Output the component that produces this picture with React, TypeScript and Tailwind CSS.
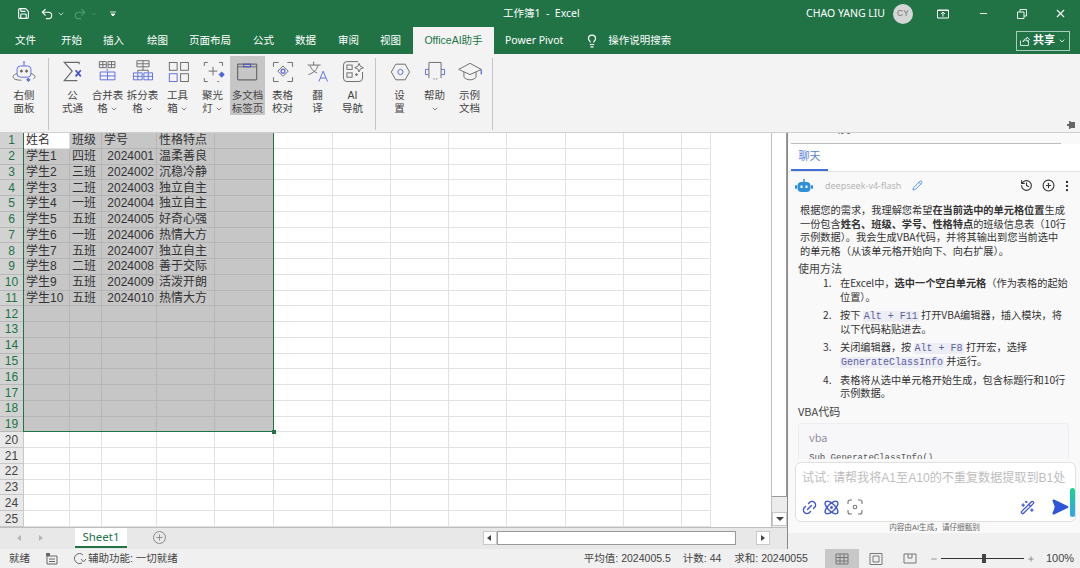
import React from 'react';
import {
  Save, Undo2, Redo2, ChevronDown, Lightbulb, Minus, X, Pencil, History, CirclePlus,
  EllipsisVertical, Link2, Atom, WandSparkles, SendHorizontal, Plus,
} from 'lucide-react';

const BLUE = '#5b6ee1';
const GRAY = '#6b6b6b';

const tabs: [string, string][] = [
  ['文件', 'ml-[15px]'], ['开始', 'ml-[25px]'], ['插入', 'ml-[21px]'], ['绘图', 'ml-[23px]'], ['页面布局', 'ml-[21px]'],
  ['公式', 'ml-[22px]'], ['数据', 'ml-[21px]'], ['审阅', 'ml-[22px]'], ['视图', 'ml-[21px]'],
];

const Svg = ({ children }: { children: React.ReactNode }) => (
  <svg width="26" height="26" viewBox="0 0 30 30" fill="none" stroke={GRAY} strokeWidth="1.1">{children}</svg>
);

const icons: Record<string, React.ReactNode> = {
  robot: (
    <Svg>
      <rect x="7" y="8" width="16" height="13" rx="4" stroke={BLUE} />
      <circle cx="12" cy="14" r="1.2" fill={GRAY} /><circle cx="18" cy="14" r="1.2" fill={GRAY} />
      <path d="M15 8V4" stroke={BLUE} /><circle cx="15" cy="3.5" r="1" fill={BLUE} stroke="none" />
      <path d="M7 17c-5 1-6 4-3 6 2 1 5 1.500 8 1.500M23 17c5 1 6 4 3 6" />
      <path d="M18 24l2-2 2 2-2 2z" fill={BLUE} stroke={BLUE} />
    </Svg>
  ),
  sum: (
    <Svg>
      <path d="M22 6V4H5l9 10-9 11h15" strokeWidth="1.4" />
      <path d="M18 13l6 7M24 13l-6 7" stroke="#4050d0" strokeWidth="2" />
    </Svg>
  ),
  merge: (
    <Svg>
      <path d="M5 3h8v7H5zM15 3h8v7h-8zM9 3v7M5 6.500h8M19 3v7M15 6.500h8" />
      <path d="M14 11v3" stroke={BLUE} />
      <path d="M6 15h17v9H6zM6 19.500h17M14.500 15v9" stroke={BLUE} />
    </Svg>
  ),
  split: (
    <Svg>
      <path d="M8 2h14v7H8zM8 5.500h14M15 2v7" />
      <path d="M15 9v4M9 15v-2h12v2" stroke={GRAY} />
      <path d="M4 16h10v8H4zM9 16v8M4 20h10M16 16h10v8H16zM21 16v8M16 20h10" stroke={BLUE} />
    </Svg>
  ),
  tool: (
    <Svg>
      <rect x="5" y="4" width="9" height="9" /><rect x="18" y="4" width="9" height="9" />
      <rect x="5" y="17" width="9" height="9" stroke={BLUE} /><rect x="18" y="17" width="9" height="9" />
    </Svg>
  ),
  spot: (
    <Svg>
      <path d="M5 8V4h4M22 4h4v4M5 22v4h4M22 26h-2" />
      <path d="M15 9v10M10 14h10" stroke={GRAY} />
      <path d="M25 15l3 3-3 3-3-3z" fill="#4a66e0" stroke="#4a66e0" />
    </Svg>
  ),
  multi: (
    <Svg>
      <rect x="3" y="6" width="22" height="18" rx="1" strokeWidth="1.4" />
      <path d="M3 9h22" strokeWidth="1.2" />
      <rect x="10" y="6" width="8" height="3" stroke="#4a55c8" strokeWidth="1.2" />
    </Svg>
  ),
  check: (
    <Svg>
      <path d="M4 9V4h6M20 4h6v5M4 21v5h6M20 26h6v-5" />
      <path d="M15 8l6 6-6 6-6-6z" />
      <circle cx="15" cy="14" r="2.200" stroke={BLUE} strokeWidth="1.500" />
    </Svg>
  ),
  trans: (
    <Svg>
      <path d="M3 7h15M10 3v4M15 7c-1 5-5 9-11 11M6 8c2 5 5 7 8 8" />
      <path d="M16 26l5-12 5 12M18 22h6" stroke={BLUE} />
    </Svg>
  ),
  nav: (
    <Svg>
      <path d="M21 3H8a4 4 0 0 0-4 4v15a4 4 0 0 0 4 4h14a4 4 0 0 0 4-4v-7" />
      <rect x="8" y="7" width="6" height="5" /><rect x="8" y="16" width="6" height="5" />
      <path d="M22 5l1.500 3.500L27 10l-3.500 1.500L22 15l-1.500-3.500L17 10l3.500-1.500z" />
      <circle cx="19" cy="18" r="1" fill={GRAY} />
    </Svg>
  ),
  gear: (
    <Svg>
      <path d="M10 6h11l5 9-5 9H10l-5-9z" />
      <circle cx="15.500" cy="15" r="3" stroke={BLUE} />
    </Svg>
  ),
  help: (
    <Svg>
      <path d="M8 22V4h14v18" />
      <path d="M8 12H4v6h4M22 12h4v6h-4" stroke={BLUE} />
      <path d="M13 23h6" strokeDasharray="1.500 1.500" />
    </Svg>
  ),
  edu: (
    <Svg>
      <path d="M15 5L2 12l13 6 13-6z" />
      <path d="M8 15v6c3 4 11 4 14 0v-6" />
      <path d="M28 12v6" stroke={BLUE} strokeWidth="1.500" />
    </Svg>
  ),
};

const Tool = ({ icon, l1, l2, chev, w = 'w-[35px]', active }: { icon: string; l1: string; l2?: string; chev?: boolean; w?: string; active?: boolean }) => (
  <div className={`${w} h-[59px] flex flex-col items-center ${active ? 'bg-[#c6c6c6]' : ''}`}>
    <div className="h-[31px] flex items-center justify-center">{icons[icon]}</div>
    <div className="text-[10.5px] leading-[13px] mt-[2px] text-[#444] text-center whitespace-nowrap">
      <div>{l1}</div>
      <div className="flex items-center justify-center gap-[2px] h-[13px]">
        {l2}
        {chev && <ChevronDown size={8} strokeWidth={2} />}
      </div>
    </div>
  </div>
);

const Sep = () => <div className="w-px h-[72px] bg-[#c4c4c4] mt-[2px]" />;

const rows: string[][] = [
  ['姓名', '班级', '学号', '性格特点'],
  ['学生1', '四班', '2024001', '温柔善良'],
  ['学生2', '三班', '2024002', '沉稳冷静'],
  ['学生3', '二班', '2024003', '独立自主'],
  ['学生4', '一班', '2024004', '独立自主'],
  ['学生5', '五班', '2024005', '好奇心强'],
  ['学生6', '一班', '2024006', '热情大方'],
  ['学生7', '五班', '2024007', '独立自主'],
  ['学生8', '二班', '2024008', '善于交际'],
  ['学生9', '五班', '2024009', '活泼开朗'],
  ['学生10', '五班', '2024010', '热情大方'],
];

const COLS = 13;

const Sheet = () => (
  <div className="relative h-[394px] grid grid-cols-[24px_46px_32px_55px_58px_59px_59px_58px_58px_58px_59px_58px_58px_29px] grid-rows-[repeat(25,minmax(0,1fr))] text-[12px] leading-[14px] text-[#333] overflow-hidden">
    {Array.from({ length: 25 }).map((_, r) => (
      <React.Fragment key={r}>
        <div className={`min-h-0 flex items-center justify-center border-b border-r text-[12px] ${r < 19 ? 'bg-[#d2d2d2] text-[#217346] border-[#b8b8b8]' : 'bg-[#e9e9e9] text-[#444] border-[#c8c8c8]'}`}>
          {r + 1}
        </div>
        {Array.from({ length: COLS }).map((_, c) => {
          const sel = r < 19 && c < 5;
          const text = rows[r]?.[c] ?? '';
          const first = r === 0 && c === 0;
          const isNum = c === 2 && r > 0;
          return (
            <div
              key={c}
              className={`min-h-0 flex items-center border-b border-r whitespace-nowrap px-[2px] ${isNum ? 'justify-end' : ''} ${first ? 'bg-white border-[#e0e0e0]' : sel ? 'bg-[#c6c6c6] border-[#b6b6b6]' : 'bg-white border-[#e2e2e2]'}`}
            >
              {text}
            </div>
          );
        })}
      </React.Fragment>
    ))}
    <div className="absolute left-[23px] top-0 w-[251px] h-[299px] border border-[#217346] border-t-0 pointer-events-none" />
    <div className="absolute left-[272px] top-[297px] w-[4px] h-[4px] bg-[#217346]" />
  </div>
);

const Code = ({ children }: { children: React.ReactNode }) => (
  <code className="font-['Liberation_Mono',monospace] text-[10px] leading-[1] bg-[#ecedf5] text-[#5c5f9e] px-[1px]">{children}</code>
);

const ListItem = ({ n, children }: { n: number; children: React.ReactNode }) => (
  <div className="flex mb-[4.5px]">
    <span className="w-[17px] shrink-0">{n}.</span>
    <div>{children}</div>
  </div>
);

const Panel = () => (
  <div className="w-[293px] shrink-0 flex flex-col bg-[#f9f9f9] border-l border-[#8a8a8a] overflow-hidden">
    <div className="h-[11px] mx-[3px] w-[270px] border-b border-[#bdbdbd] overflow-hidden">
      <div className="text-[10px] leading-none -mt-[8px] ml-[8px] text-[#555]">OfficeAI助手</div>
    </div>
    <div className="h-[28px] border-b border-[#e2e2e2] bg-white shrink-0">
      <div className="w-[37px] ml-[3px] h-full border-b-2 border-[#3f6fd8] flex items-center justify-center text-[11px] text-[#5b7fd6]">聊天</div>
    </div>
    <div className="flex-1 min-h-0 overflow-hidden">
      <div className="h-[27px] flex items-center">
        <svg width="18" height="14" viewBox="0 0 18 14" className="ml-[7px]">
          <path d="M9 0v3" stroke="#2f8fd8" strokeWidth="1.500" />
          <rect x="2.500" y="3" width="13" height="10" rx="4" fill="#2f8fd8" />
          <rect x="0" y="6" width="2" height="4" rx="1" fill="#2f8fd8" /><rect x="16" y="6" width="2" height="4" rx="1" fill="#2f8fd8" />
          <rect x="5.500" y="6.500" width="2" height="2.500" fill="#fff" /><rect x="10.500" y="6.500" width="2" height="2.500" fill="#fff" />
        </svg>
        <span className="ml-[12px] text-[9px] text-[#b5b5b5] font-['Noto_Sans',sans-serif]">deepseek-v4-flash</span>
        <Pencil size={11} className="ml-[11px] text-[#4a90e2]" />
        <History size={13} className="ml-[97px] text-[#333]" />
        <CirclePlus size={13} className="ml-[9px] text-[#333]" />
        <EllipsisVertical size={14} className="ml-[5px] text-[#333]" />
      </div>
      <div className="text-[10.2px] leading-[13.6px] text-[#333] font-['Noto_Sans_CJK_SC',sans-serif] whitespace-nowrap">
        <p className="ml-[12px] mt-[4px]">
          根据您的需求，我理解您希望<b>在当前选中的单元格位置</b>生成<br />
          一份包含<b>姓名、班级、学号、性格特点</b>的班级信息表（10行<br />
          示例数据）。我会生成VBA代码，并将其输出到您当前选中<br />
          的单元格（从该单元格开始向下、向右扩展）。
        </p>
        <p className="ml-[10px] mt-[4px] text-[11px] leading-[15px] text-[#444]">使用方法</p>
        <div className="ml-[35px]">
          <ListItem n={1}>在Excel中，<b>选中一个空白单元格</b>（作为表格的起始<br />位置）。</ListItem>
          <ListItem n={2}>按下 <Code>Alt + F11</Code> 打开VBA编辑器，插入模块，将<br />以下代码粘贴进去。</ListItem>
          <ListItem n={3}>关闭编辑器，按 <Code>Alt + F8</Code> 打开宏，选择<br /><Code>GenerateClassInfo</Code> 并运行。</ListItem>
          <ListItem n={4}>表格将从选中单元格开始生成，包含标题行和10行<br />示例数据。</ListItem>
        </div>
        <p className="ml-[10px] mt-[3px] text-[11px] leading-[15px] text-[#444]">VBA代码</p>
        <div className="ml-[10px] w-[271px] mt-[4px] h-[60px] border border-[#ececf2] rounded-t-[4px] bg-[#f7f7fa] px-[10px] pt-[7px] text-[#8f8fa8] text-[11px]">
          vba
          <div className="mt-[7px] font-['Liberation_Mono',monospace] text-[9px] text-[#555]">Sub GenerateClassInfo()</div>
        </div>
      </div>
    </div>
    <div className="shrink-0 ml-[7px] mr-[4px] h-[60px] mt-[3px] bg-white border border-[#e0e0e0] rounded-[6px] relative flex flex-col">
      <div className="text-[12.1px] text-[#bdbdbd] mt-[6px] ml-[6px] whitespace-nowrap">试试: 请帮我将A1至A10的不重复数据提取到B1处</div>
      <div className="flex items-center mt-auto mb-[5px] ml-[5px]">
        <Link2 size={17} className="text-[#3f55d8] -rotate-45" />
        <Atom size={17} className="ml-[5px] text-[#3f55d8]" />
        <svg width="16" height="16" viewBox="0 0 16 16" fill="none" stroke="#777" strokeWidth="1.100" className="ml-[7px]">
          <path d="M1 5V3a2 2 0 0 1 2-2h2M11 1h2a2 2 0 0 1 2 2v2M1 11v2a2 2 0 0 0 2 2h2M11 15h2a2 2 0 0 0 2-2v-2" />
          <circle cx="8" cy="8" r="1.800" />
        </svg>
        <WandSparkles size={15} className="ml-[157px] text-[#3f55d8]" />
        <SendHorizontal size={18} className="ml-[16px] text-[#2f55d8] fill-[#2f55d8]" />
      </div>
      <div className="absolute right-0 top-[25px] w-[5px] h-[29px] rounded-full bg-gradient-to-b from-[#1ed08a] to-[#3aa0ea]" />
    </div>
    <div className="h-[11px] shrink-0 text-center text-[7.6px] leading-[11px] text-[#666] pl-[1px]">内容由AI生成，请仔细甄别</div>
    <div className="h-[16px] shrink-0 bg-[#f0f0f0]" />
  </div>
);

const Arrow = ({ dir, className = '' }: { dir: 'l' | 'r' | 'd'; className?: string }) => {
  const d = dir === 'l' ? 'M6 2L2 5l4 3z' : dir === 'r' ? 'M3 2l4 3-4 3z' : 'M1 3h8L5 7z';
  return (
    <svg width="10" height="10" viewBox="0 0 10 10" className={className}><path d={d} fill="#444" /></svg>
  );
};

const ViewIcon = ({ kind }: { kind: number }) => (
  <svg width="14" height="12" viewBox="0 0 14 12" fill="none" stroke="#777" strokeWidth="1">
    {kind === 0 && <path d="M1 1h12v10H1zM5 1v10M9 1v10M1 4.500h12M1 8h12" />}
    {kind === 1 && <path d="M1 .5h12v11H1zM4 3h6v6H4z" />}
    {kind === 2 && <path d="M1 1h12v9H1zM5 1v4h4V1" />}
  </svg>
);

export default function App() {
  return (
    <div className="w-[1080px] h-[568px] overflow-hidden flex flex-col bg-white font-['Liberation_Sans','Noto_Sans_CJK_SC',sans-serif]">
      {/* title bar */}
      <div className="h-[27px] shrink-0 bg-[#217346] text-white flex items-center relative">
        <Save size={13} className="ml-[17px]" />
        <Undo2 size={14} className="ml-[10px]" />
        <ChevronDown size={8} className="ml-[3px]" />
        <Redo2 size={14} className="ml-[8px] text-[#4f9a70]" />
        <ChevronDown size={8} className="ml-[3px] text-[#4f9a70]" />
        <svg width="6" height="6" viewBox="0 0 6 6" className="ml-[12px]"><path d="M0 1h6M1 3h4l-2 2z" stroke="#fff" strokeWidth=".8" fill="#fff" /></svg>
        <span className="ml-[387px] text-[10.5px] font-['Noto_Sans','Noto_Sans_CJK_SC',sans-serif] whitespace-nowrap">工作簿1 &nbsp;-&nbsp; Excel</span>
        <span className="ml-auto text-[10.5px] font-['Noto_Sans',sans-serif] whitespace-nowrap">CHAO YANG LIU</span>
        <div className="ml-[8px] w-[20px] h-[20px] rounded-full bg-[#d6d6d6] text-[#777] text-[8.5px] flex items-center justify-center">CY</div>
        <svg width="12" height="10" viewBox="0 0 12 10" fill="none" stroke="#fff" className="ml-[24px]"><path d="M.5 1h11v8H.500zM1 1.500h10" /><path d="M6 7.500V3.500M4 5l2-2 2 2" /></svg>
        <Minus size={11} className="ml-[29px]" />
        <svg width="10" height="10" viewBox="0 0 10 10" fill="none" stroke="#fff" strokeWidth=".9" className="ml-[28px]"><path d="M.5 3h6.500v6.500H.500zM3 3V.5h6.500V7H7" /></svg>
        <X size={13} className="ml-[27px] mr-[13px]" />
      </div>
      {/* tab row */}
      <div className="h-[27px] shrink-0 bg-[#217346] text-white flex items-center text-[10.5px] whitespace-nowrap">
        {tabs.map(([t, m]) => (
          <span key={t} className={m}>{t}</span>
        ))}
        <div className="ml-[12px] w-[81px] h-full bg-[#f3f3f3] text-[#217346] flex items-center justify-center">OfficeAI助手</div>
        <span className="ml-[11px] font-['Noto_Sans',sans-serif]">Power Pivot</span>
        <Lightbulb size={14} className="ml-[22px]" />
        <span className="ml-[9px]">操作说明搜索</span>
        <div className="ml-auto mr-[10px] w-[54px] h-[20px] border border-[#a8cdb8] flex items-center justify-center gap-[3px] font-bold text-[11px]">
          <svg width="10" height="10" viewBox="0 0 10 10" fill="none" stroke="#fff" strokeWidth=".8"><path d="M.5 4.500v5h8V5M3 6c0-2 2-3.500 4-3.500V1l2.500 2.500L7 5.500V4C5 4 3.500 5 3 6z" /></svg>
          共享
          <ChevronDown size={8} strokeWidth={2.500} />
        </div>
      </div>
      {/* ribbon */}
      <div className="h-[79px] shrink-0 bg-[#f3f3f3] border-b border-[#d0d0d0] flex items-start pt-[2px] relative">
        <Tool icon="robot" l1="右侧" l2="面板" w="w-[48px]" />
        <Sep />
        <div className="w-[6px]" />
        <Tool icon="sum" l1="公" l2="式通" />
        <Tool icon="merge" l1="合并表" l2="格" chev />
        <Tool icon="split" l1="拆分表" l2="格" chev />
        <Tool icon="tool" l1="工具" l2="箱" chev />
        <Tool icon="spot" l1="聚光" l2="灯" chev />
        <Tool icon="multi" l1="多文档" l2="标签页" active />
        <Tool icon="check" l1="表格" l2="校对" />
        <Tool icon="trans" l1="翻" l2="译" />
        <Tool icon="nav" l1="AI" l2="导航" />
        <div className="w-[5px]" />
        <Sep />
        <div className="w-[6px]" />
        <Tool icon="gear" l1="设" l2="置" />
        <Tool icon="help" l1="帮助" chev />
        <Tool icon="edu" l1="示例" l2="文档" />
        <div className="w-[5px]" />
        <Sep />
        <svg width="14" height="10" viewBox="0 0 14 10" className="absolute right-[4px] bottom-[2px]" fill="#666"><path d="M0 5h5V4h2V1h1l1 1h4v6H9L8 9H7V6H5V5z" /></svg>
      </div>
      {/* body */}
      <div className="flex-1 min-h-0 flex">
        <div className="flex-1 min-w-0 flex flex-col">
          <div className="flex">
            <div className="flex-1 min-w-0"><Sheet /></div>
            <div className="w-[16px] shrink-0 h-[394px] bg-[#ececec] border-l border-[#bdbdbd] flex flex-col">
              <div className="h-[364px] bg-white border-r border-b border-[#9a9a9a]" />
              <div className="mt-auto mb-[1px] h-[14px] bg-white border border-[#c8c8c8] flex items-center justify-center"><Arrow dir="d" /></div>
            </div>
          </div>
          <div className="h-[22px] shrink-0 bg-[#e8e8e8] border-t border-[#bdbdbd] flex items-start relative">
            <span className="ml-[15px] mt-[5px] flex gap-[11px]"><Arrow dir="l" className="opacity-30" /><Arrow dir="r" className="opacity-30" /></span>
            <div className="ml-[29px] w-[52px] h-[20px] bg-white border-b-2 border-[#217346] text-[#217346] text-[11.5px] flex items-center justify-center font-['Noto_Sans',sans-serif]">Sheet1</div>
            <div className="ml-[26px] mt-[3px] w-[13px] h-[13px] rounded-full border border-[#888] flex items-center justify-center"><Plus size={9} className="text-[#777]" /></div>
            <div className="ml-[317px] mt-[3px] w-[14px] h-[14px] bg-white border border-[#c8c8c8] flex items-center justify-center"><Arrow dir="l" /></div>
            <div className="mt-[3px] w-[239px] h-[14px] bg-white border border-[#9a9a9a]" />
            <div className="ml-[20px] mt-[3px] w-[14px] h-[14px] bg-white border border-[#c8c8c8] flex items-center justify-center"><Arrow dir="r" /></div>
          </div>
        </div>
        <Panel />
      </div>
      {/* status bar */}
      <div className="h-[19px] shrink-0 bg-[#f0f0f0] flex items-center text-[10.5px] text-[#444] whitespace-nowrap">
        <span className="ml-[9px]">就绪</span>
        <svg width="12" height="12" viewBox="0 0 12 12" fill="none" stroke="#666" className="ml-[16px]"><path d="M1 3h10v8H1zM3 6h6M3 8.500h6" /><rect x="0" y="0" width="4" height="3" fill="#666" stroke="none" /></svg>
        <svg width="12" height="12" viewBox="0 0 12 12" fill="none" stroke="#666" className="ml-[16px]"><path d="M9 2a5 5 0 1 0-1 8M7 6l2.500 3L12 6" /></svg>
        <span className="ml-[2px]">辅助功能: 一切就绪</span>
        <span className="ml-[406px]">平均值: 2024005.5</span>
        <span className="ml-[12px]">计数: 44</span>
        <span className="ml-[13px]">求和: 20240055</span>
        <div className="ml-[17px] w-[34px] h-full bg-[#c8c8c8] flex items-center justify-center"><ViewIcon kind={0} /></div>
        <div className="w-[34px] h-full flex items-center justify-center"><ViewIcon kind={1} /></div>
        <div className="w-[34px] h-full flex items-center justify-center"><ViewIcon kind={2} /></div>
        <Minus size={8} className="ml-[3px] text-[#666]" />
        <div className="ml-[3px] w-[83px] h-px bg-[#333] relative">
          <div className="absolute left-[41px] -top-[4px] w-[4px] h-[9px] bg-[#444]" />
        </div>
        <Plus size={8} className="ml-[3px] text-[#666]" />
        <span className="ml-[11px] text-[11px]">100%</span>
      </div>
    </div>
  );
}
